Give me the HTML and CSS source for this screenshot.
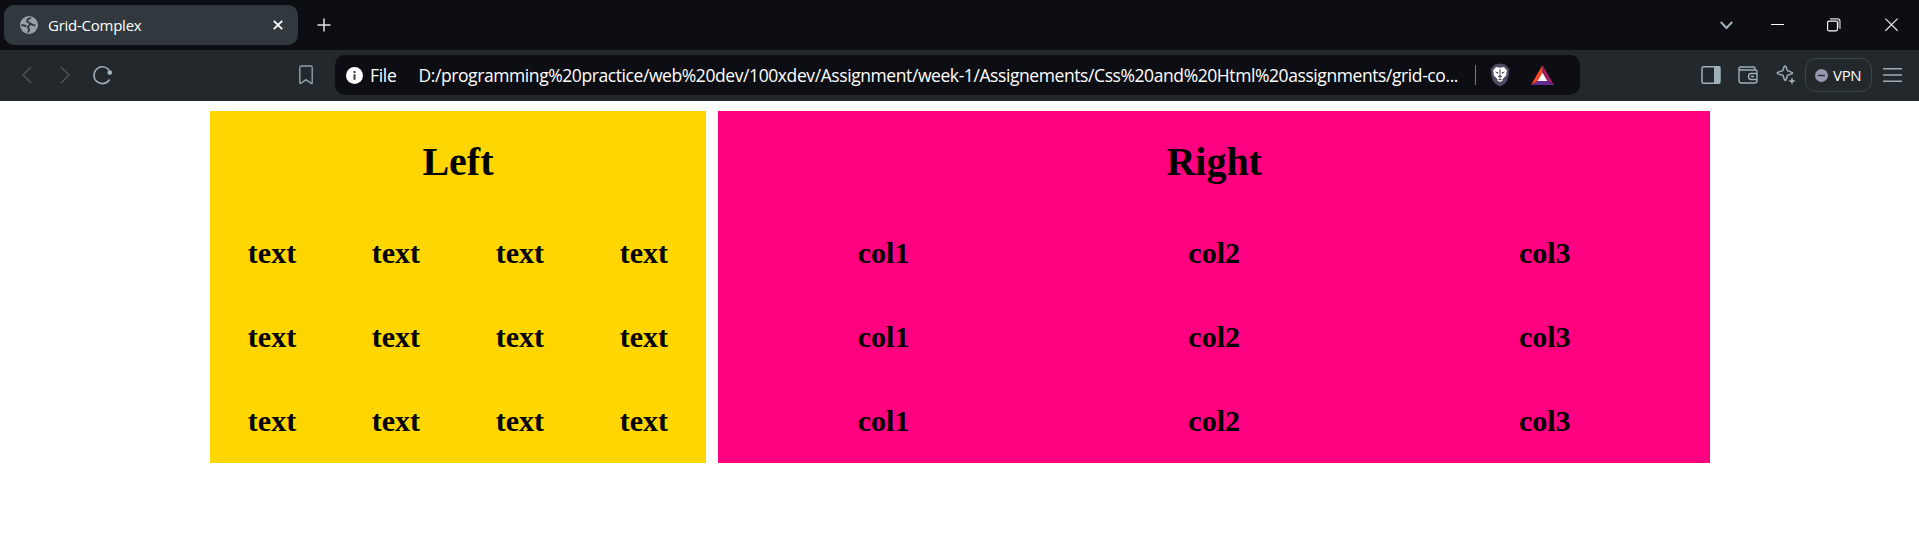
FILE: index.html
```html
<!DOCTYPE html>
<html lang="en">
<head>
<meta charset="utf-8">
<title>Grid-Complex</title>
<link rel="stylesheet" href="styles.css">
</head>
<body>
<header class="browser">
  <div class="tabstrip">
    <div class="tab">
      <svg class="globe" width="18" height="18" viewBox="0 0 18 18"><circle cx="9" cy="9" r="9" fill="#9aa0a8"/><path d="M11 1.800C9.500 2.500 7 3 7 5c0 1.600 3.200 1.300 3.200 3.200 0 1.500-2.400 1.300-2.400 2.800 0 1.200 1.500 1.300 1.400 2.800 0 1-.9 1.600-1.200 2.700M1.300 9c1.800.1 3.600.3 5 1.500M10.500 7.700c1.800.5 2.700 2 5 1.500" fill="none" stroke="#31393e" stroke-width="1.800"/></svg>
      <span class="tab-title">Grid-Complex</span>
      <svg class="tab-close" width="10" height="10" viewBox="0 0 10 10"><path d="M.8.800l8.400 8.400M9.200.800L.8 9.200" stroke="#fff" stroke-width="1.800"/></svg>
    </div>
    <svg class="new-tab" width="14" height="14" viewBox="0 0 14 14"><path d="M7 .5v13M.5 7h13" stroke="#e4e4e5" stroke-width="1.500"/></svg>
    <div class="window-controls">
      <svg width="13" height="14" viewBox="0 0 13 14"><path d="M.8 4l5.700 6 5.700-6" fill="none" stroke="#a3b2ba" stroke-width="2"/></svg>
      <svg width="13" height="14" viewBox="0 0 13 14"><path d="M0 6.500h13" stroke="#fff"/></svg>
      <svg width="14" height="14" viewBox="0 0 14 14"><rect x=".6" y="3.100" width="9.800" height="9.800" rx="1.500" fill="none" stroke="#fff" stroke-width="1.100"/><path d="M3 .9h7.500q2.500 0 2.500 2.500V11" fill="none" stroke="#ddd" stroke-width="1.100"/><path d="M3 1.800h6.500q2 0 2 2V10" fill="none" stroke="#77787c" stroke-width="1"/></svg>
      <svg width="13" height="14" viewBox="0 0 13 14"><path d="M.4.600l12.200 12.200M12.600.600L.4 12.800" stroke="#e8e8e8" stroke-width="1.200"/></svg>
    </div>
  </div>
  <div class="toolbar">
    <svg class="back" width="10" height="18" viewBox="0 0 10 18"><path d="M9 1L1 9l8 8" fill="none" stroke="#4b565b" stroke-width="1.500"/></svg>
    <svg class="forward" width="10" height="18" viewBox="0 0 10 18"><path d="M1 1l8 8-8 8" fill="none" stroke="#4b565b" stroke-width="1.500"/></svg>
    <svg class="reload" width="20" height="20" viewBox="0 0 20 20"><path d="M16.600 14.500A8.400 8.400 0 1 1 16.400 5.600" fill="none" stroke="#a1b2ba" stroke-width="1.500"/><circle cx="16.800" cy="7.600" r="2.400" fill="#a1b2ba"/></svg>
    <svg class="bookmark" width="14" height="20" viewBox="0 0 14 20"><path d="M2.200 1h9.600q1.400 0 1.400 1.500v15.300q0 1-1 .5L7 14.600l-5.200 3.700q-1 .5-1-.5V2.500Q.8 1 2.200 1z" fill="none" stroke="#90a1aa" stroke-width="1.400"/></svg>
    <div class="urlbar">
      <svg class="info" width="17" height="17" viewBox="0 0 17 17"><circle cx="8.500" cy="8.500" r="8.500" fill="#fff"/><path d="M7.500 4h2v2h-2zM7.500 7.300h2v5.500h-2z" fill="#3c3d42"/></svg>
      <span class="scheme">File</span>
      <span class="url">D:/programming%20practice/web%20dev/100xdev/Assignment/week-1/Assignements/Css%20and%20Html%20assignments/grid-co...</span>
      <span class="separator"></span>
      <svg class="shield" width="20" height="24" viewBox="0 0 20 24"><path d="M10 .5l5 1 2 2 2.500 2.500-.8 3 .3 2.500-2.500 7.500-3 2.500L10 23.500l-3.500-2L3.500 19 1 11.500 1.300 9 .5 6 3 3.500l2-2z" fill="#4c4d63"/><path d="M6 4l4 .8L14 4l3 3.500-.8 3.500.3 1-4 4.300.2 1.200L10 19l-2.700-1.500.2-1.200-4-4.300.3-1L3 7.500z" fill="#fff"/><path d="M5 8.500l3.400.8L7.500 11zM15 8.500l-3.400.8.9 1.700zM9.300 6.500h1.400l-.3 5.500 1.700 1.500L10 15l-2.100-1.500L9.600 12zM8 16.500l2-1 2 1-2 1z" fill="#4c4d63"/></svg>
      <svg class="bat" width="23" height="20" viewBox="0 0 23 20"><path d="M11.500 0L0 20l7-4 4.500-8z" fill="#ff4724"/><path d="M11.500 0L23 20l-7-4-4.500-8z" fill="#9e1f63"/><path d="M0 20h23l-7-4H7z" fill="#662d91"/><path d="M11.500 7.800L16.300 16H6.700z" fill="#fff"/></svg>
    </div>
    <div class="actions">
      <svg width="20" height="20" viewBox="0 0 20 20"><rect x="1" y="1.700" width="18" height="16.600" rx="1.500" fill="none" stroke="#9fb0b8" stroke-width="1.500"/><path d="M13 1.500h6v17h-6z" fill="#9fb0b8"/></svg>
      <svg width="20" height="20" viewBox="0 0 20 20"><path d="M17 5V3.500Q17 2 15.500 2H2.500Q1 2 1 3.500v12Q1 18 3.500 18h13q2.500 0 2.500-2V6.500Q19 5 17.500 5H2.500Q1 5 1 3.500M19 8.500h-6q-2.500 0-2.500 3t2.500 3h6M13 11.500h3" fill="none" stroke="#9fb0b8" stroke-width="1.400"/></svg>
      <svg width="20" height="20" viewBox="0 0 20 20"><path d="M9 1q.9 0 1.200 1.200l1.300 3.500 3.900 1.400q2.200.9 0 1.800l-3.900 1.400-1.300 3.900Q9.500 16.500 8.400 14.400L7 10.400 2.200 8.900Q.1 8 2.200 7.100L6.700 5.700l1.200-3.500Q8.200 1 9 1z" fill="none" stroke="#9fb0b8" stroke-width="1.500"/><path d="M16 12l1 3 3 1-3 1-1 3-1-3-3-1 3-1z" fill="#9fb0b8"/></svg>
      <div class="vpn"><svg width="13" height="13" viewBox="0 0 13 13"><circle cx="6.500" cy="6.500" r="6.500" fill="#9798ae"/><path d="M3 6.500h7" stroke="#242438" stroke-width="1.300"/></svg><span class="vpn-label">VPN</span></div>
      <svg class="menu" width="19" height="16" viewBox="0 0 19 16"><path d="M0 1.700h19M0 8h19M0 14.300h19" stroke="#9fabb2" stroke-width="1.400"/></svg>
    </div>
  </div>
</header>
<main class="container">
  <section class="panel left">
    <h1>Left</h1>
    <div class="cells">
      <h2>text</h2><h2>text</h2><h2>text</h2><h2>text</h2>
      <h2>text</h2><h2>text</h2><h2>text</h2><h2>text</h2>
      <h2>text</h2><h2>text</h2><h2>text</h2><h2>text</h2>
    </div>
  </section>
  <section class="panel right">
    <h1>Right</h1>
    <div class="cells">
      <h2>col1</h2><h2>col2</h2><h2>col3</h2>
      <h2>col1</h2><h2>col2</h2><h2>col3</h2>
      <h2>col1</h2><h2>col2</h2><h2>col3</h2>
    </div>
  </section>
</main>
</body>
</html>
```
FILE: styles.css
```css
* { box-sizing: border-box; }
body { margin: 0; background: #fff; color: #000; font-family: "Liberation Serif", "Times New Roman", serif; overflow: hidden; }
svg { display: block; flex: none; }

.browser { font-family: "Open Sans", "Noto Sans", sans-serif; color: #fff; white-space: nowrap; }
.tabstrip { display: flex; align-items: center; height: 50px; padding: 0 21px 0 4px; background: #0d0e13; }
.tab { display: flex; align-items: center; width: 293.500px; height: 40px; padding: 0 15px 0 16px; border-radius: 10px; background: #31393e; }
.tab-title { margin-left: 10px; margin-top: -1px; font-size: 15px; letter-spacing: -0.25px; }
.tab-close { margin-left: auto; }
.new-tab { margin-left: 19px; }
.window-controls { display: flex; align-items: center; margin-left: auto; }
.window-controls svg:nth-child(2) { margin-left: 38px; }
.window-controls svg:nth-child(3) { margin-left: 43px; }
.window-controls svg:nth-child(4) { margin-left: 44px; }

.toolbar { display: flex; align-items: center; height: 51px; padding: 0 17px 1px 22px; background: #22282c; }
.forward { margin-left: 28px; }
.reload { margin-left: 23px; }
.bookmark { margin-left: 186px; }
.urlbar { display: flex; align-items: center; width: 1245px; height: 40px; margin-left: 22px; padding-left: 11px; border-radius: 10px; background: #0d0e13; font-size: 17.500px; }
.scheme { width: 48.500px; margin-left: 7px; letter-spacing: -0.3px; }
.url { width: 1041px; letter-spacing: -0.415px; }
.scheme, .url { flex: none; margin-top: -1px; }
.separator { width: 1.500px; height: 20px; margin-left: 15px; background: #77787c; }
.shield { margin-left: 14px; }
.bat { margin-left: 21px; }
.actions { display: flex; align-items: center; margin-left: auto; gap: 17.500px; }
.vpn { display: flex; align-items: center; gap: 5px; width: 67px; height: 34px; margin-left: -8px; padding-left: 9px; border: 1.500px solid #3b464a; border-radius: 11px; font-size: 15px; }
.vpn-label { letter-spacing: -0.3px; }
.menu { margin-left: -6.500px; }

.container { display: grid; grid-template-columns: 1fr 2fr; gap: 12.500px; width: 1500px; margin: 10px auto 0; padding: 0; transform: none; }
.container { margin-left: 210px; }
.panel { height: 352px; text-align: center; }
.left { background: #ffd600; }
.right { background: #ff0080; }
.panel h1 { margin: 0; padding-top: 28px; height: 100px; font-size: 40px; line-height: 46px; }
.cells { display: grid; }
.left .cells { grid-template-columns: repeat(4, 1fr); }
.right .cells { grid-template-columns: repeat(3, 1fr); }
.cells h2 { margin: 0; height: 84px; padding-top: 25px; font-size: 30px; line-height: 34px; }
```
